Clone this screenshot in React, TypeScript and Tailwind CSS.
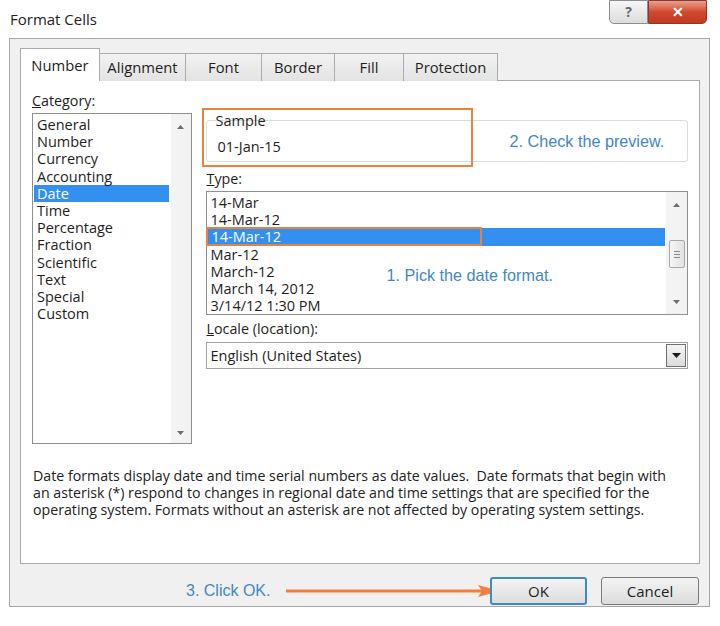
import React from "react";

const categories = [
  "General",
  "Number",
  "Currency",
  "Accounting",
  "Date",
  "Time",
  "Percentage",
  "Fraction",
  "Scientific",
  "Text",
  "Special",
  "Custom",
];

const types = [
  "14-Mar",
  "14-Mar-12",
  "14-Mar-12",
  "Mar-12",
  "March-12",
  "March 14, 2012",
  "3/14/12 1:30 PM",
];

const tabs = [
  { label: "Alignment", w: "w-[86px]" },
  { label: "Font", w: "w-[76px]" },
  { label: "Border", w: "w-[73px]" },
  { label: "Fill", w: "w-[69px]" },
  { label: "Protection", w: "w-[94px]" },
];

function UpArrow() {
  return (
    <svg width="7" height="4" viewBox="0 0 7 4">
      <path d="M0 4 L3.5 0 L7 4 Z" fill="#6d6d6d" />
    </svg>
  );
}

function DownArrow() {
  return (
    <svg width="7" height="4" viewBox="0 0 7 4">
      <path d="M0 0 L3.5 4 L7 0 Z" fill="#6d6d6d" />
    </svg>
  );
}

export default function App() {
  const ui = { fontFamily: '"Open Sans", "Noto Sans", sans-serif' };
  const note = { fontFamily: '"Liberation Sans", Arial, sans-serif' };
  return (
    <div className="w-[720px] h-[626px] bg-white overflow-hidden text-[#1e1e1e]" style={ui}>
      {/* title bar */}
      <div className="flex items-start justify-between h-[38px]">
        <div className="pl-[10px] pt-[9px] text-[15px] leading-[20px] text-[#222]">Format Cells</div>
        <div className="flex mr-[13px]">
          <div className="w-[39px] h-[24px] flex items-center justify-center border border-[#8c8c8c] rounded-bl-[5px] bg-gradient-to-b from-[#f7f7f7] to-[#dcdcdc] text-[#667] text-[14px] font-bold leading-none">
            ?
          </div>
          <div className="w-[59px] h-[24px] flex items-center justify-center border border-[#8a3a2a] rounded-br-[5px] bg-gradient-to-b from-[#e8a08c] via-[#d2472f] to-[#c13a22] text-white text-[14px] font-bold leading-none">
            ✕
          </div>
        </div>
      </div>

      {/* dialog frame */}
      <div className="ml-[9px] mr-[10px] h-[569px] border border-[#a6a6a6] bg-[#f0f0f0] pl-[10px] pr-[9px] pt-[9px] flex flex-col">
        {/* tab strip */}
        <div className="flex items-end h-[33px] relative z-10">
          <div className="w-[80px] h-[33px] bg-white border border-b-0 border-[#acacac] flex items-center justify-center text-[14.8px]">
            Number
          </div>
          {tabs.map((t) => (
            <div
              key={t.label}
              className={`${t.w} h-[28px] border border-l-0 border-b-0 border-[#acacac] bg-gradient-to-b from-[#f2f2f2] to-[#e3e3e3] flex items-center justify-center text-[14.8px]`}
            >
              {t.label}
            </div>
          ))}
        </div>

        {/* page */}
        <div className="-mt-px h-[484px] bg-white border border-[#acacac] pl-[11px] pr-[11px] pt-[11px] flex flex-col">
          <div className="flex">
            {/* category column */}
            <div className="w-[160px] flex flex-col">
              <div className="text-[14.3px] leading-[18px] h-[21px]">
                <span className="underline">C</span>ategory:
              </div>
              <div className="h-[331px] border border-[#8e8f8f] flex">
                <div className="flex-1 pt-[2px] pl-[1px]">
                  {categories.map((c) => (
                    <div
                      key={c}
                      className={`h-[17.2px] leading-[17px] text-[14.5px] pl-[3px] ${
                        c === "Date" ? "bg-[#3390f0] text-white mr-[2px]" : ""
                      }`}
                    >
                      {c}
                    </div>
                  ))}
                </div>
                <div className="w-[20px] bg-[#f3f3f3] flex flex-col items-center justify-between pt-[11px] pb-[8px]">
                  <UpArrow />
                  <DownArrow />
                </div>
              </div>
            </div>

            {/* type column */}
            <div className="ml-[14px] w-[484px] flex flex-col">
              <div className="relative mt-[28px] h-[42px] border border-[#dcdcdc] rounded-[3px] flex items-center">
                <div className="absolute left-[-5px] top-[-13px] w-[271px] h-[59px] border-2 border-[#e9823f]" />
                <div className="absolute left-[8px] top-[-9px] text-[14.5px] leading-[18px] px-[1px]">Sample</div>
                <div className="pl-[11px] pt-[11px] w-[303px] text-[14.5px]">01-Jan-15</div>
                <div className="text-[16.2px] text-[#4288c4]" style={note}>
                  2. Check the preview.
                </div>
              </div>

              <div className="mt-[8px] text-[14.3px] leading-[18px] h-[21px] pl-[1px]">
                <span className="underline">T</span>ype:
              </div>
              <div className="h-[124px] border border-[#8e8f8f] flex">
                <div className="flex-1 pt-[2px] relative">
                  {types.map((t, i) => (
                    <div
                      key={i}
                      className={`relative h-[17.2px] leading-[17px] text-[14.5px] pl-[4px] ${
                        i === 2 ? "bg-[#3390f0] text-white ml-[1px] mr-[1px]" : ""
                      }`}
                    >
                      <span>{t}</span>
                      {i === 2 && (
                        <div className="absolute left-[-2px] top-[-1px] w-[276px] h-[19px] border-2 border-[#e9823f]" />
                      )}
                    </div>
                  ))}
                  <div className="absolute left-[180px] top-[71px] text-[16.2px] text-[#4288c4]" style={note}>
                    1. Pick the date format.
                  </div>
                </div>
                <div className="w-[21px] bg-[#f3f3f3] flex flex-col items-center pt-[11px] pb-[10px]">
                  <UpArrow />
                  <div className="mt-[33px] w-[16px] h-[28px] border border-[#a8a8a8] rounded-[2px] bg-gradient-to-r from-[#f6f6f6] to-[#e2e2e2] flex flex-col items-center justify-center gap-[2px]">
                    <div className="w-[6px] h-px bg-[#888]" />
                    <div className="w-[6px] h-px bg-[#888]" />
                    <div className="w-[6px] h-px bg-[#888]" />
                  </div>
                  <div className="flex-1" />
                  <DownArrow />
                </div>
              </div>

              <div className="mt-[5px] text-[14.3px] leading-[18px] h-[22px] pl-[1px]">
                <span className="underline">L</span>ocale (location):
              </div>
              <div className="h-[27px] border border-[#a3a3a3] flex items-center">
                <div className="flex-1 pl-[4px] text-[14.5px]">English (United States)</div>
                <div className="w-[20px] h-[23px] mr-px border border-[#707070] bg-gradient-to-b from-[#f5f5f5] to-[#dcdcdc] flex items-center justify-center">
                  <svg width="9" height="5" viewBox="0 0 9 5">
                    <path d="M0 0 L4.5 5 L9 0 Z" fill="#1a1a1a" />
                  </svg>
                </div>
              </div>
            </div>
          </div>

          <div className="mt-[23px] text-[14.2px] leading-[17px] pl-px text-[#222] whitespace-nowrap">
            Date formats display date and time serial numbers as date values.&nbsp; Date formats that begin with
            <br />
            an asterisk (*) respond to changes in regional date and time settings that are specified for the
            <br />
            operating system. Formats without an asterisk are not affected by operating system settings.
          </div>
        </div>

        {/* button row */}
        <div className="flex items-center mt-[13px] h-[28px]">
          <div className="ml-[166px] w-[84px] whitespace-nowrap text-[16px] text-[#4288c4]" style={note}>
            3. Click OK.
          </div>
          <svg width="216" height="14" viewBox="0 0 216 14" className="ml-[14px] shrink-0">
            <line x1="2" y1="7" x2="200" y2="7" stroke="#ef8040" strokeWidth="3" />
            <path d="M194 1 L216 7 L194 13 L198 7 Z" fill="#ef8040" />
          </svg>
          <div className="ml-[-10px] w-[97px] h-[28px] shrink-0 border-2 border-[#3d8ac6] rounded-[3px] bg-gradient-to-b from-[#f4f4f4] to-[#dcdcdc] flex items-center justify-center text-[15px]">
            OK
          </div>
          <div className="ml-[14px] w-[98px] h-[28px] shrink-0 border border-[#7a7a7a] rounded-[3px] bg-gradient-to-b from-[#f4f4f4] to-[#dcdcdc] flex items-center justify-center text-[15px]">
            Cancel
          </div>
        </div>
      </div>
    </div>
  );
}
